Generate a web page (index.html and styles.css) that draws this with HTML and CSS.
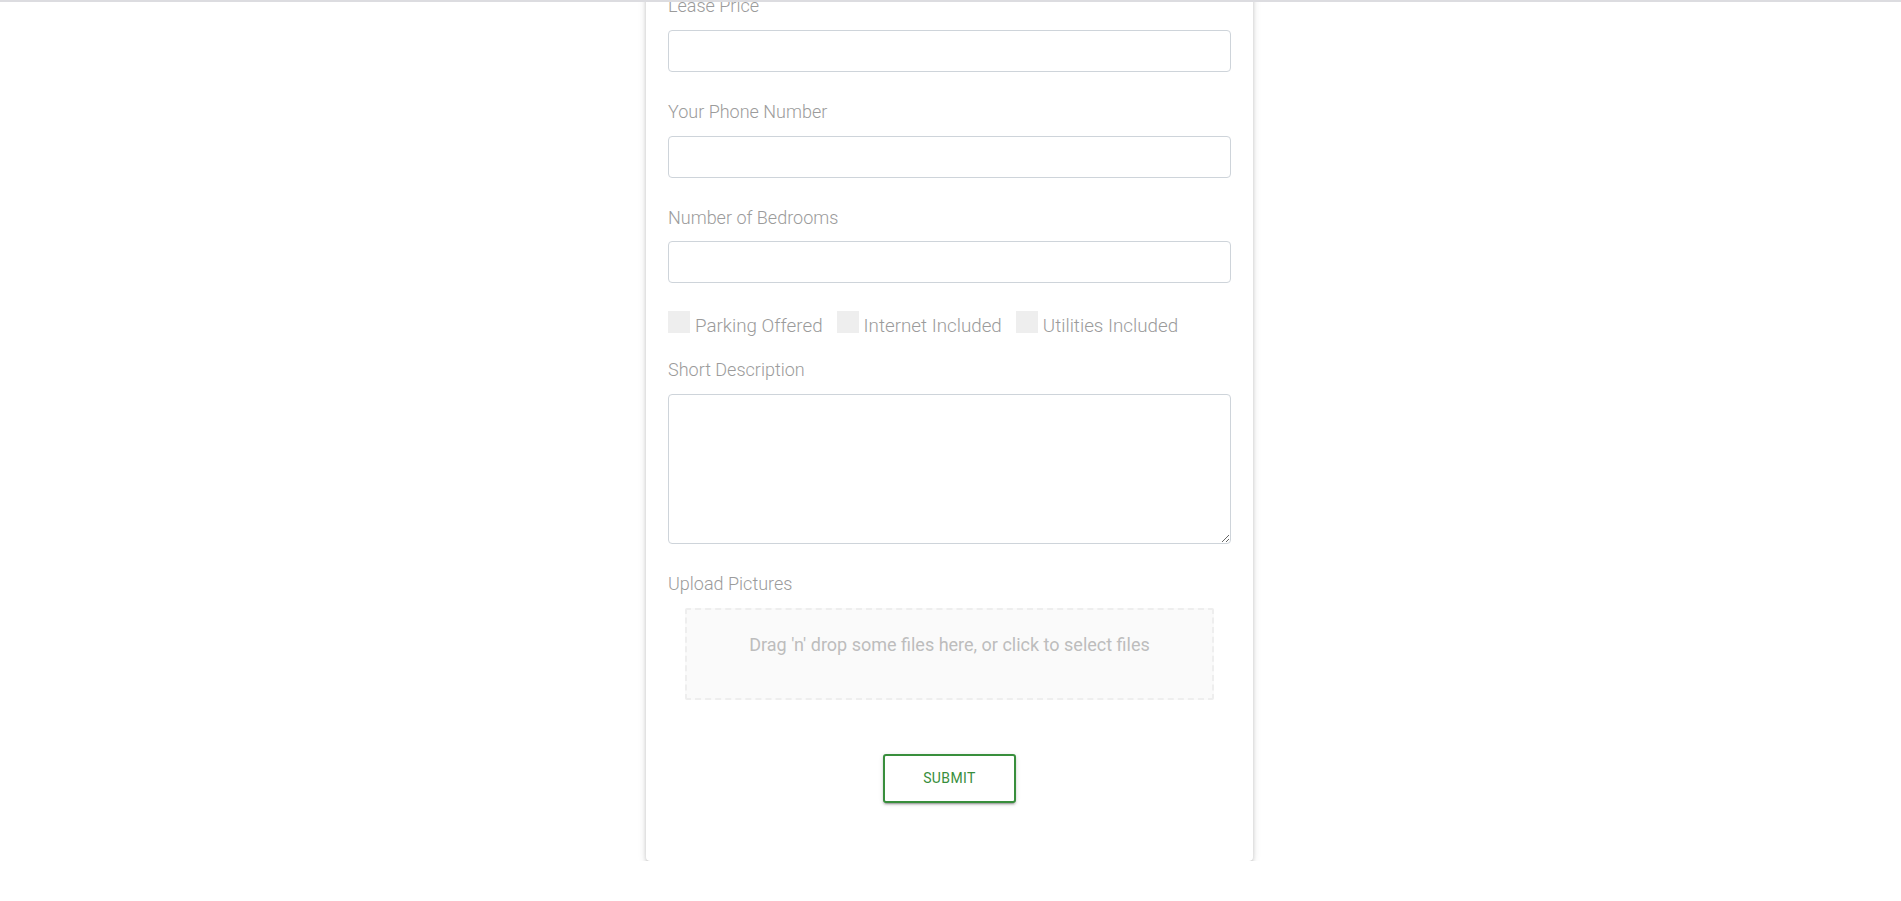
FILE: index.html
```html
<!DOCTYPE html>
<html lang="en">
<head>
<meta charset="utf-8">
<title>New Listing</title>
<link rel="stylesheet" href="styles.css">
</head>
<body>
<div class="topbar"></div>
<main class="page">
  <form class="card">
    <div class="group">
      <label class="label">Lease Price</label>
      <input class="field" type="text">
    </div>
    <div class="group">
      <label class="label">Your Phone Number</label>
      <input class="field" type="text">
    </div>
    <div class="group">
      <label class="label">Number of Bedrooms</label>
      <input class="field" type="text">
    </div>
    <div class="checks">
      <label class="check"><span class="box"></span>Parking Offered</label>
      <label class="check"><span class="box"></span>Internet Included</label>
      <label class="check"><span class="box"></span>Utilities Included</label>
    </div>
    <div class="group desc">
      <label class="label">Short Description</label>
      <textarea class="field area"></textarea>
    </div>
    <div class="upload">
      <label class="label">Upload Pictures</label>
      <div class="dropzone">
        <p>Drag 'n' drop some files here, or click to select files</p>
      </div>
    </div>
    <div class="actions">
      <button type="button" class="submit">Submit</button>
    </div>
  </form>
</main>
</body>
</html>
```

FILE: styles.css
```css
html, body {
  margin: 0;
  background: #ffffff;
  font-family: Roboto, "Liberation Sans", Arial, sans-serif;
}

.topbar {
  position: fixed;
  top: 0;
  left: 0;
  right: 0;
  height: 2px;
  background: #dcdce0;
  z-index: 10;
}

.page {
  display: flex;
  justify-content: center;
  padding-right: 2px;
}

.card {
  width: 607px;
  box-sizing: border-box;
  margin-top: -25.6px;
  padding: 20px 22px 57.7px;
  background: #ffffff;
  border-radius: 4px;
  box-shadow: 0 3px 3px -2px rgba(0, 0, 0, 0.2), 0 3px 4px 0 rgba(0, 0, 0, 0.14), 0 1px 8px 0 rgba(0, 0, 0, 0.12);
}

.group {
  margin-bottom: 28px;
}

.label {
  display: block;
  font-size: 18px;
  font-weight: 300;
  line-height: 24.6px;
  margin-bottom: 11px;
  color: #9b9b9b;
}

.field {
  display: block;
  width: 100%;
  height: 42px;
  box-sizing: border-box;
  margin: 0;
  padding: 6px 12px;
  border: 1px solid #ced4da;
  border-radius: 4px;
  background: #ffffff;
  font: inherit;
  font-size: 18px;
  color: #495057;
  outline: none;
}

.area {
  height: 150px;
  resize: vertical;
}

.checks {
  display: flex;
  align-items: baseline;
  gap: 14px;
  margin-bottom: 19px;
}

.check {
  font-size: 18.8px;
  font-weight: 300;
  line-height: 26px;
  color: #9b9b9b;
}

.box {
  display: inline-block;
  width: 22px;
  height: 22px;
  margin-right: 5px;
  background: #eeeeee;
  vertical-align: -1px;
}

.desc {
  margin-bottom: 28.5px;
}

.dropzone {
  margin: 3.9px 17px 0;
  padding: 21px 20px 40.6px;
  border: 2px dashed #eeeeee;
  border-radius: 2px;
  background: #fafafa;
}

.dropzone p {
  margin: 0;
  font-size: 18px;
  line-height: 27px;
  text-align: center;
  color: #bdbdbd;
}

.actions {
  display: flex;
  justify-content: center;
  padding-top: 53.4px;
}

.submit {
  width: 132.4px;
  height: 49px;
  box-sizing: border-box;
  border: 2px solid #388e3c;
  border-radius: 3px;
  background: #ffffff;
  color: #388e3c;
  font-family: Roboto, "Liberation Sans", Arial, sans-serif;
  font-size: 14px;
  font-weight: 400;
  letter-spacing: 0.4px;
  text-transform: uppercase;
  box-shadow: 0 3px 1px -2px rgba(0, 0, 0, 0.2), 0 2px 2px 0 rgba(0, 0, 0, 0.14), 0 1px 5px 0 rgba(0, 0, 0, 0.12);
  cursor: pointer;
}
```
